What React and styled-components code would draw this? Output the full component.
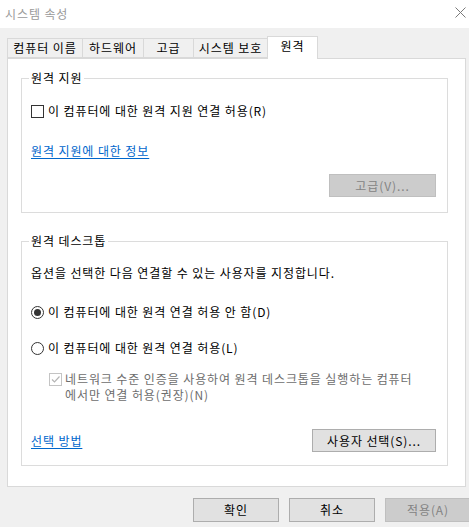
import React, { useState } from "react";
import styled, { createGlobalStyle } from "styled-components";

const GlobalStyle = createGlobalStyle`
  body {
    margin: 0;
    background: #f0f0f0;
    font-family: "Noto Sans CJK KR", "Noto Sans", sans-serif;
    font-size: 12px;
    letter-spacing: 0.9px;
    color: #000;
  }
`;

const tabs = [
  { label: "컴퓨터 이름", width: 76 },
  { label: "하드웨어", width: 62 },
  { label: "고급", width: 51 },
  { label: "시스템 보호", width: 75 },
  { label: "원격", width: 51 },
];

export default function App() {
  const [active, setActive] = useState(4);
  const [mode, setMode] = useState("deny");

  return (
    <>
      <GlobalStyle />
      <Window>
        <TitleBar>
          <Title>시스템 속성</Title>
          <CloseIcon width="11" height="11" viewBox="0 0 11 11">
            <path d="M0.5 0.5 L10.5 10.5 M10.5 0.5 L0.5 10.5" stroke="#7a7a7a" strokeWidth="1" fill="none" />
          </CloseIcon>
        </TitleBar>
        <Body>
          <TabStrip>
            {tabs.map((t, i) => (
              <Tab key={t.label} $width={t.width} $active={i === active} onClick={() => setActive(i)}>
                {t.label}
              </Tab>
            ))}
          </TabStrip>
          <Panel>
            <Group $pt={24} $pb={15}>
              <Legend>원격 지원</Legend>
              <OptionRow>
                <CheckBox />
                이 컴퓨터에 대한 원격 지원 연결 허용(R)
              </OptionRow>
              <LinkText $mt={24}>원격 지원에 대한 정보</LinkText>
              <ButtonRow $mt={15}>
                <Button $width={107} disabled>고급(V)...</Button>
              </ButtonRow>
            </Group>
            <Group $pt={23} $pb={13} $mt={28}>
              <Legend>원격 데스크톱</Legend>
              <Line>옵션을 선택한 다음 연결할 수 있는 사용자를 지정합니다.</Line>
              <OptionRow $mt={23} onClick={() => setMode("deny")}>
                <Radio $checked={mode === "deny"} />
                이 컴퓨터에 대한 원격 연결 허용 안 함(D)
              </OptionRow>
              <OptionRow $mt={20} onClick={() => setMode("allow")}>
                <Radio $checked={mode === "allow"} />
                이 컴퓨터에 대한 원격 연결 허용(L)
              </OptionRow>
              <SubOption>
                <DisabledCheck>
                  <svg width="11" height="11" viewBox="0 0 11 11">
                    <path d="M2 5.5 L4.5 8 L9.5 2.5" stroke="#b5b5b5" strokeWidth="1.2" fill="none" />
                  </svg>
                </DisabledCheck>
                <span>
                  네트워크 수준 인증을 사용하여 원격 데스크톱을 실행하는 컴퓨터
                  <br />
                  에서만 연결 허용(권장)(N)
                </span>
              </SubOption>
              <ButtonRow $mt={26} $between>
                <LinkText>선택 방법</LinkText>
                <Button $width={124}>사용자 선택(S)...</Button>
              </ButtonRow>
            </Group>
          </Panel>
          <Footer>
            <Button $width={86} $height={24}>확인</Button>
            <Button $width={86} $height={24}>취소</Button>
            <Button $width={86} $height={24} disabled>적용(A)</Button>
          </Footer>
        </Body>
      </Window>
    </>
  );
}

const Window = styled.div`
  width: 469px;
  height: 527px;
  display: flex;
  flex-direction: column;
  background: #f0f0f0;
  overflow: hidden;
`;

const TitleBar = styled.div`
  height: 27px;
  flex-shrink: 0;
  background: #fff;
  display: flex;
  align-items: center;
  justify-content: space-between;
  padding: 0 3px 1px 5px;
`;

const Title = styled.span`
  color: #9a9a9a;
  font-size: 12px;
  line-height: 16px;
`;

const CloseIcon = styled.svg`
  display: block;
  margin-bottom: 2px;
`;

const Body = styled.div`
  padding: 8px 0 0 7px;
  display: flex;
  flex-direction: column;
`;

const TabStrip = styled.div`
  display: flex;
  align-items: flex-end;
  height: 22px;
  position: relative;
  z-index: 1;
`;

const Tab = styled.div`
  width: ${(p) => p.$width}px;
  height: ${(p) => (p.$active ? 23 : 20)}px;
  margin-right: -1px;
  margin-bottom: ${(p) => (p.$active ? -1 : 0)}px;
  box-sizing: border-box;
  border: 1px solid #d9d9d9;
  border-bottom: ${(p) => (p.$active ? "none" : "1px solid #d9d9d9")};
  background: ${(p) => (p.$active ? "#fff" : "#f0f0f0")};
  display: flex;
  align-items: center;
  justify-content: center;
  padding-bottom: ${(p) => (p.$active ? 4 : 0)}px;
  line-height: 16px;
  cursor: default;
  white-space: nowrap;
`;

const Panel = styled.div`
  width: 459px;
  box-sizing: border-box;
  background: #fff;
  border: 1px solid #d9d9d9;
  padding: 19px 0 20px 13px;
`;

const Group = styled.div`
  position: relative;
  width: 427px;
  box-sizing: border-box;
  border: 1px solid #dcdcdc;
  margin-top: ${(p) => p.$mt || 0}px;
  padding: ${(p) => p.$pt}px 11px ${(p) => p.$pb}px 9px;
  display: flex;
  flex-direction: column;
  align-items: flex-start;
`;

const Legend = styled.span`
  position: absolute;
  top: -9px;
  left: 7px;
  padding: 0 2px;
  background: #fff;
  line-height: 16px;
`;

const Line = styled.div`
  line-height: 16px;
  white-space: nowrap;
`;

const OptionRow = styled.div`
  display: flex;
  align-items: center;
  gap: 4px;
  height: 16px;
  line-height: 16px;
  margin-top: ${(p) => p.$mt || 0}px;
  white-space: nowrap;
  cursor: default;
`;

const CheckBox = styled.span`
  width: 13px;
  height: 13px;
  box-sizing: border-box;
  border: 1px solid #333;
  background: #fff;
  flex-shrink: 0;
`;

const Radio = styled.span`
  width: 13px;
  height: 13px;
  box-sizing: border-box;
  border: 1px solid #333;
  border-radius: 50%;
  background: #fff;
  flex-shrink: 0;
  display: flex;
  align-items: center;
  justify-content: center;
  &::after {
    content: "";
    width: 7px;
    height: 7px;
    border-radius: 50%;
    background: #333;
    display: ${(p) => (p.$checked ? "block" : "none")};
  }
`;

const SubOption = styled.div`
  display: flex;
  align-items: flex-start;
  gap: 3px;
  margin: 15px 0 0 18px;
  color: #6d6d6d;
  line-height: 16px;
  white-space: nowrap;
`;

const DisabledCheck = styled.span`
  width: 13px;
  height: 13px;
  margin-top: 2px;
  box-sizing: border-box;
  border: 1px solid #c4c4c4;
  display: flex;
  align-items: center;
  justify-content: center;
  flex-shrink: 0;
  svg {
    display: block;
  }
`;

const LinkText = styled.span`
  color: #0066cc;
  text-decoration: underline;
  text-underline-offset: 2px;
  line-height: 16px;
  margin-top: ${(p) => p.$mt || 0}px;
  cursor: pointer;
`;

const ButtonRow = styled.div`
  align-self: stretch;
  display: flex;
  align-items: center;
  justify-content: ${(p) => (p.$between ? "space-between" : "flex-end")};
  margin-top: ${(p) => p.$mt || 0}px;
`;

const Button = styled.button`
  width: ${(p) => p.$width}px;
  height: ${(p) => p.$height || 23}px;
  box-sizing: border-box;
  border: 1px solid ${(p) => (p.disabled ? "#bfbfbf" : "#adadad")};
  background: ${(p) => (p.disabled ? "#cccccc" : "#e1e1e1")};
  color: ${(p) => (p.disabled ? "#838383" : "#000")};
  font-family: inherit;
  font-size: 12px;
  letter-spacing: inherit;
  line-height: 16px;
  padding: 0;
  border-radius: 0;
`;

const Footer = styled.div`
  display: flex;
  justify-content: flex-end;
  gap: 10px;
  margin-top: 11px;
  padding-right: 0;
  margin-right: -2px;
`;
